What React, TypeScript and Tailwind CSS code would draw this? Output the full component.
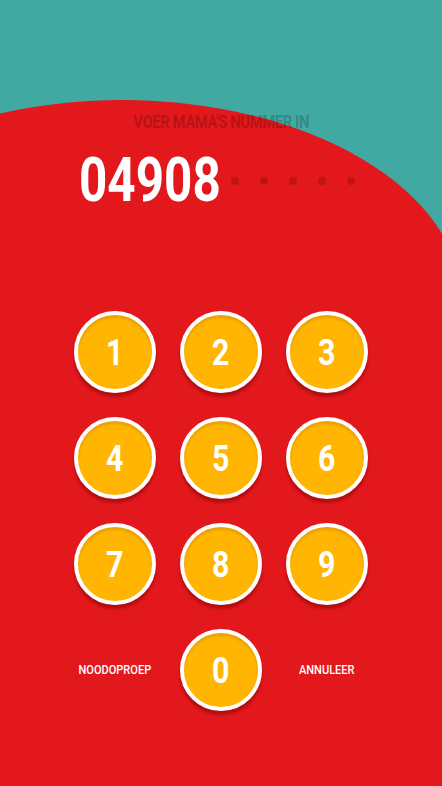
import React from 'react';

const keys = ['1', '2', '3', '4', '5', '6', '7', '8', '9'];

const Key: React.FC<{ label: string }> = ({ label }) => (
  <button className="w-[82px] h-[82px] rounded-full bg-[#ffb502] border-[4px] border-white shadow-[0_4px_3px_rgba(120,0,0,0.45)] flex items-center justify-center">
    <span className="w-full h-full rounded-full shadow-[inset_0_3px_2px_rgba(150,80,0,0.18)] flex items-center justify-center">
      <span className="inline-block scale-x-[0.82] text-[37px] font-bold text-white leading-none">{label}</span>
    </span>
  </button>
);

const App: React.FC = () => {
  return (
    <div
      className="relative w-full h-[786px] overflow-hidden bg-[#41a9a1]"
      style={{ fontFamily: 'Roboto, "Liberation Sans", sans-serif' }}
    >
      <svg className="absolute inset-0" width="442" height="786" viewBox="0 0 442 786">
        <ellipse cx="122" cy="302" rx="340" ry="202" fill="#e2181c" />
        <rect x="0" y="300" width="442" height="486" fill="#e2181c" />
      </svg>

      <div className="relative flex flex-col items-center">
        <div className="mt-[111px] h-[20px] flex items-center">
          <span className="inline-block scale-x-[0.82] text-[18px] font-bold text-black/20 tracking-tight whitespace-nowrap">
            VOER MAMA'S NUMMER IN
          </span>
        </div>

        <div className="mt-[19px] w-[442px] flex items-center pl-[79px]">
          <span className="inline-block origin-left scale-x-[0.81] text-[61px] font-bold text-white leading-none w-[141px] whitespace-nowrap">
            04908
          </span>
          <div className="flex items-center gap-[21px] ml-[11px]">
            {[0, 1, 2, 3, 4].map((i) => (
              <span key={i} className="w-[8px] h-[8px] rounded-full bg-black/15" />
            ))}
          </div>
        </div>

        <div className="mt-[100px] grid grid-cols-[106px_106px_106px] gap-y-[24px] justify-items-center">
          {keys.map((k) => (
            <Key key={k} label={k} />
          ))}
          <div className="h-[82px] flex items-center justify-center">
            <span className="inline-block scale-x-[0.85] text-[13px] font-medium text-white whitespace-nowrap">NOODOPROEP</span>
          </div>
          <Key label="0" />
          <div className="h-[82px] flex items-center justify-center">
            <span className="inline-block scale-x-[0.85] text-[13px] font-medium text-white whitespace-nowrap">ANNULEER</span>
          </div>
        </div>
      </div>
    </div>
  );
};

export default App;
